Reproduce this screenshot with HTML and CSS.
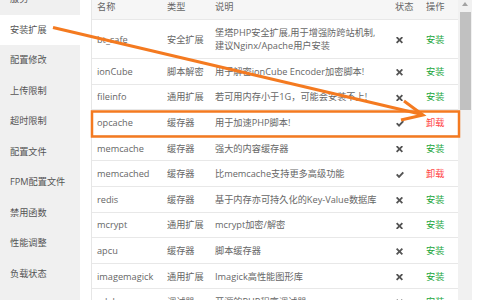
FILE: index.html
```html
<!DOCTYPE html>
<html lang="zh-CN">
<head>
<meta charset="utf-8">
<title>PHP 扩展</title>
<link rel="stylesheet" href="styles.css">
</head>
<body>
<div class="page">
  <nav class="side">
    <div class="side-item">服务</div>
    <div class="side-item active">安装扩展</div>
    <div class="side-item">配置修改</div>
    <div class="side-item">上传限制</div>
    <div class="side-item">超时限制</div>
    <div class="side-item">配置文件</div>
    <div class="side-item">FPM配置文件</div>
    <div class="side-item">禁用函数</div>
    <div class="side-item">性能调整</div>
    <div class="side-item">负载状态</div>
  </nav>
  <section class="table">
    <div class="row head">
      <div class="cell">名称</div><div class="cell">类型</div><div class="cell">说明</div><div class="cell">状态</div><div class="cell">操作</div>
    </div>
    <div class="row tall">
      <div class="cell">bt_safe</div><div class="cell">安全扩展</div><div class="cell desc">堡塔PHP安全扩展,用于增强防跨站机制,<br>建议Nginx/Apache用户安装</div><div class="cell"><span class="st no"></span></div><div class="cell"><span class="act install">安装</span></div>
    </div>
    <div class="row">
      <div class="cell">ionCube</div><div class="cell">脚本解密</div><div class="cell">用于解密ionCube Encoder加密脚本!</div><div class="cell"><span class="st no"></span></div><div class="cell"><span class="act install">安装</span></div>
    </div>
    <div class="row">
      <div class="cell">fileinfo</div><div class="cell">通用扩展</div><div class="cell">若可用内存小于1G，可能会安装不上!</div><div class="cell"><span class="st no"></span></div><div class="cell"><span class="act install">安装</span></div>
    </div>
    <div class="row">
      <div class="cell">opcache</div><div class="cell">缓存器</div><div class="cell">用于加速PHP脚本!</div><div class="cell"><span class="st yes"></span></div><div class="cell"><span class="act remove">卸载</span></div>
    </div>
    <div class="row">
      <div class="cell">memcache</div><div class="cell">缓存器</div><div class="cell">强大的内容缓存器</div><div class="cell"><span class="st no"></span></div><div class="cell"><span class="act install">安装</span></div>
    </div>
    <div class="row">
      <div class="cell">memcached</div><div class="cell">缓存器</div><div class="cell">比memcache支持更多高级功能</div><div class="cell"><span class="st yes"></span></div><div class="cell"><span class="act remove">卸载</span></div>
    </div>
    <div class="row">
      <div class="cell">redis</div><div class="cell">缓存器</div><div class="cell">基于内存亦可持久化的Key-Value数据库</div><div class="cell"><span class="st no"></span></div><div class="cell"><span class="act install">安装</span></div>
    </div>
    <div class="row">
      <div class="cell">mcrypt</div><div class="cell">通用扩展</div><div class="cell">mcrypt加密/解密</div><div class="cell"><span class="st no"></span></div><div class="cell"><span class="act install">安装</span></div>
    </div>
    <div class="row">
      <div class="cell">apcu</div><div class="cell">缓存器</div><div class="cell">脚本缓存器</div><div class="cell"><span class="st no"></span></div><div class="cell"><span class="act install">安装</span></div>
    </div>
    <div class="row">
      <div class="cell">imagemagick</div><div class="cell">通用扩展</div><div class="cell">Imagick高性能图形库</div><div class="cell"><span class="st no"></span></div><div class="cell"><span class="act install">安装</span></div>
    </div>
    <div class="row">
      <div class="cell">xdebug</div><div class="cell">调试器</div><div class="cell">开源的PHP程序调试器</div><div class="cell"><span class="st no"></span></div><div class="cell"><span class="act install">安装</span></div>
    </div>
  </section>
  <div class="scrollbar">
    <div class="sb-up"></div>
    <div class="sb-thumb"></div>
  </div>
</div>
<svg class="annot" width="480" height="300" viewBox="0 0 480 300">
  <rect x="92" y="111.5" width="367" height="25" fill="none" stroke="#f47a20" stroke-width="2.5"/>
  <line x1="53" y1="27.5" x2="420" y2="114" stroke="#f47a20" stroke-width="3"/>
  <polyline points="404,101 423,115 401,120" fill="none" stroke="#f47a20" stroke-width="3" stroke-linejoin="miter"/>
</svg>
</body>
</html>
```

FILE: styles.css
```css
html, body {
  margin: 0;
  padding: 0;
  background: #fff;
}
body {
  width: 480px;
  height: 300px;
  overflow: hidden;
  position: relative;
  font-family: "Open Sans", "Noto Sans CJK SC", sans-serif;
  font-size: 9.2px;
  color: #666;
}
.page {
  display: flex;
  height: 300px;
  padding-right: 8px;
  box-sizing: border-box;
}
.side {
  width: 80px;
  flex: none;
  background: #f0f0f0;
  margin-top: -16px;
  height: 316px;
}
.side-item {
  height: 30.5px;
  line-height: 30.5px;
  padding-left: 10px;
  color: #555;
  white-space: nowrap;
}
.side-item.active {
  background: #fff;
}
.table {
  margin-left: 11px;
  width: 367px;
  flex: none;
  margin-top: -6px;
  border-left: 1px solid #e6e6e6;
  box-sizing: border-box;
}
.row {
  display: grid;
  grid-template-columns: 70px 48px 180px 31px 1fr;
  height: 25.6px;
  border-bottom: 1px solid #e8e8e8;
  box-sizing: border-box;
  align-items: center;
  white-space: nowrap;
}
.row.head {
  height: 26px;
  background: #f6f6f6;
}
.row.tall {
  height: 39px;
}
.cell {
  padding-left: 5px;
  line-height: 13px;
}
.st {
  display: inline-block;
  width: 7px;
  height: 7px;
  margin-left: 1px;
  vertical-align: middle;
  background: #555;
}
.st.no {
  clip-path: polygon(18% 0, 50% 32%, 82% 0, 100% 18%, 68% 50%, 100% 82%, 82% 100%, 50% 68%, 18% 100%, 0 82%, 32% 50%, 0 18%);
}
.st.yes {
  width: 8px;
  clip-path: polygon(0 55%, 18% 38%, 38% 62%, 82% 8%, 100% 25%, 38% 100%);
}
.act.install {
  color: #20a53a;
}
.act.remove {
  color: #f44;
}
.scrollbar {
  width: 14px;
  flex: none;
  background: #f1f1f1;
  position: relative;
}
.sb-up {
  width: 0;
  height: 0;
  margin: 2px auto 0;
  border-left: 3px solid transparent;
  border-right: 3px solid transparent;
  border-bottom: 4px solid #a3a3a3;
}
.sb-thumb {
  margin: 6px 1px 0 2px;
  height: 98px;
  background: #c1c1c1;
}
.annot {
  position: absolute;
  left: 0;
  top: 0;
  pointer-events: none;
}
```
